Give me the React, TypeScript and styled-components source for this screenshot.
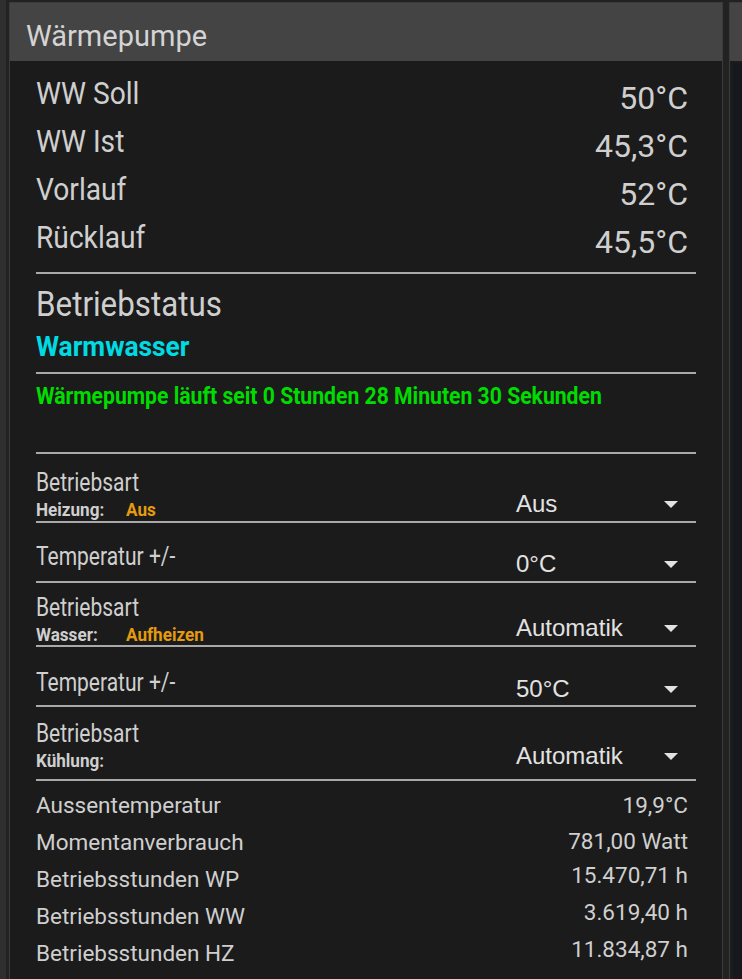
import React from 'react';
import styled, { createGlobalStyle } from 'styled-components';

const GlobalStyle = createGlobalStyle`
  html, body {
    margin: 0;
    padding: 0;
    background: #222222;
  }
  body {
    font-family: Roboto, "Noto Sans", "Liberation Sans", sans-serif;
    overflow: hidden;
  }
  * { box-sizing: border-box; }
`;

const Page = styled.div`
  display: flex;
  height: 979px;
  background: #222222;
  overflow: hidden;
`;

const SideStrip = styled.div`
  flex: 0 0 6px;
  margin-right: 3px;
  background: #2f2f2f;
`;

const Panel = styled.section`
  flex: 0 0 714px;
  margin-top: 2px;
  border: 1px solid #3b3b3b;
  border-bottom: none;
  background: #1b1b1b;
  display: flex;
  flex-direction: column;
`;

const NeighbourPanel = styled.section`
  flex: 1;
  margin-top: 2px;
  margin-left: 6px;
  border: 1px solid #3b3b3b;
  border-bottom: none;
  background: #1c1c1c;
  display: flex;
  flex-direction: column;
`;

const PanelHeader = styled.header`
  height: 58px;
  padding: 7px 0 0 16px;
  background: #444444;
  display: flex;
  align-items: center;
  color: #d4d4d4;
  font-size: 29px;
  font-weight: 400;
`;

const NeighbourBody = styled.div`
  flex: 1;
  margin: 2px 0 0 3px;
  background: #15181c;
`;

const PanelBody = styled.div`
  padding: 8px 26px 0 26px;
  display: flex;
  flex-direction: column;
`;

/* Roboto squeezed horizontally, standing in for a condensed cut */
const Narrow = styled.span<{ $squeeze?: number }>`
  display: inline-block;
  white-space: nowrap;
  transform: scaleX(${p => p.$squeeze ?? 0.88});
  transform-origin: left center;
`;

const ReadingRow = styled.div`
  display: flex;
  justify-content: space-between;
  align-items: flex-start;
  height: 48px;
  padding-right: 8px;
  color: #cfcfcf;
`;

const ReadingLabel = styled(Narrow)`
  font-size: 32px;
  line-height: 48px;
`;

const ReadingValue = styled.span`
  font-size: 32px;
  line-height: 48px;
  margin-top: 5px;
`;

const Rule = styled.div<{ $gap: number }>`
  height: 2px;
  margin-top: ${p => p.$gap}px;
  background: #a9a9a9;
  flex-shrink: 0;
`;

const StatusTitle = styled(Narrow)`
  margin-top: 10px;
  font-size: 35px;
  line-height: 42px;
  color: #cfcfcf;
`;

const StatusMode = styled(Narrow)`
  margin-top: 5px;
  font-size: 28px;
  line-height: 32px;
  font-weight: 700;
  color: #00dbe3;
`;

const RunTime = styled(Narrow)`
  margin-top: 9px;
  font-size: 23px;
  line-height: 27px;
  font-weight: 700;
  color: #00dc00;
`;

const SettingRow = styled.div<{ $height: number }>`
  display: flex;
  justify-content: space-between;
  height: ${p => p.$height + 2}px;
  border-bottom: 2px solid #a9a9a9;
`;

const LabelStack = styled.div<{ $top: number }>`
  display: flex;
  flex-direction: column;
  gap: 2px;
  padding-top: ${p => p.$top}px;
`;

const SettingLabel = styled(Narrow)`
  font-size: 25px;
  line-height: 28px;
  color: #cfcfcf;
`;

const SubLine = styled.div`
  display: flex;
  font-size: 18px;
  line-height: 22px;
  font-weight: 700;
`;

const SubName = styled(Narrow)`
  width: 90px;
  color: #cfcfcf;
`;

const SubState = styled(Narrow)`
  color: #e49b0f;
`;

const SelectBox = styled.div<{ $bottom: number }>`
  align-self: flex-end;
  margin-bottom: ${p => p.$bottom}px;
  width: 180px;
  padding-right: 18px;
  display: flex;
  justify-content: space-between;
  align-items: flex-start;
  font-family: "Liberation Sans", Arial, sans-serif;
  font-size: 24px;
  line-height: 28px;
  color: #e2e2e2;
`;

const Caret = styled.span`
  margin-top: 11px;
  width: 0;
  height: 0;
  border-left: 7.5px solid transparent;
  border-right: 7.5px solid transparent;
  border-top: 7px solid #e2e2e2;
`;

const StatsList = styled.div`
  margin-top: 6px;
  display: flex;
  flex-direction: column;
`;

const StatRow = styled.div`
  display: flex;
  justify-content: space-between;
  align-items: flex-start;
  height: 37px;
  padding-right: 8px;
  font-size: 22.5px;
  line-height: 37px;
  color: #cfcfcf;
`;

const StatValue = styled.span<{ $lift: number }>`
  margin-top: ${p => -p.$lift}px;
`;

const readings = [
  { label: 'WW Soll', value: '50°C' },
  { label: 'WW Ist', value: '45,3°C' },
  { label: 'Vorlauf', value: '52°C' },
  { label: 'Rücklauf', value: '45,5°C' },
];

type Setting = {
  label: string;
  sub?: { name: string; state?: string };
  value: string;
  height: number;
  top: number;
  bottom: number;
};

const settings: Setting[] = [
  { label: 'Betriebsart', sub: { name: 'Heizung:', state: 'Aus' }, value: 'Aus', height: 67, top: 14.5, bottom: 3 },
  { label: 'Temperatur +/-', value: '0°C', height: 58, top: 19.5, bottom: 3 },
  { label: 'Betriebsart', sub: { name: 'Wasser:', state: 'Aufheizen' }, value: 'Automatik', height: 62, top: 10.5, bottom: 3 },
  { label: 'Temperatur +/-', value: '50°C', height: 58, top: 21.5, bottom: 2 },
  { label: 'Betriebsart', sub: { name: 'Kühlung:' }, value: 'Automatik', height: 72, top: 12.5, bottom: 9 },
];

const stats = [
  { label: 'Aussentemperatur', value: '19,9°C', lift: 0 },
  { label: 'Momentanverbrauch', value: '781,00 Watt', lift: 1 },
  { label: 'Betriebsstunden WP', value: '15.470,71 h', lift: 4 },
  { label: 'Betriebsstunden WW', value: '3.619,40 h', lift: 4 },
  { label: 'Betriebsstunden HZ', value: '11.834,87 h', lift: 4 },
];

export default function App() {
  return (
    <>
      <GlobalStyle />
      <Page>
        <SideStrip />
        <Panel>
          <PanelHeader>Wärmepumpe</PanelHeader>
          <PanelBody>
            {readings.map(r => (
              <ReadingRow key={r.label}>
                <ReadingLabel>{r.label}</ReadingLabel>
                <ReadingValue>{r.value}</ReadingValue>
              </ReadingRow>
            ))}
            <Rule $gap={11} />
            <div>
              <StatusTitle $squeeze={0.895}>Betriebstatus</StatusTitle>
            </div>
            <div>
              <StatusMode $squeeze={0.94}>Warmwasser</StatusMode>
            </div>
            <Rule $gap={9} />
            <div>
              <RunTime $squeeze={0.92}>Wärmepumpe läuft seit 0 Stunden 28 Minuten 30 Sekunden</RunTime>
            </div>
            <Rule $gap={42} />
            {settings.map((s, i) => (
              <SettingRow key={i} $height={s.height}>
                <LabelStack $top={s.top}>
                  <div>
                    <SettingLabel $squeeze={0.84}>{s.label}</SettingLabel>
                  </div>
                  {s.sub && (
                    <SubLine>
                      <SubName $squeeze={0.95}>{s.sub.name}</SubName>
                      {s.sub.state && <SubState $squeeze={0.95}>{s.sub.state}</SubState>}
                    </SubLine>
                  )}
                </LabelStack>
                <SelectBox $bottom={s.bottom}>
                  <span>{s.value}</span>
                  <Caret />
                </SelectBox>
              </SettingRow>
            ))}
            <StatsList>
              {stats.map(s => (
                <StatRow key={s.label}>
                  <span>{s.label}</span>
                  <StatValue $lift={s.lift}>{s.value}</StatValue>
                </StatRow>
              ))}
            </StatsList>
          </PanelBody>
        </Panel>
        <NeighbourPanel>
          <PanelHeader />
          <NeighbourBody />
        </NeighbourPanel>
      </Page>
    </>
  );
}
